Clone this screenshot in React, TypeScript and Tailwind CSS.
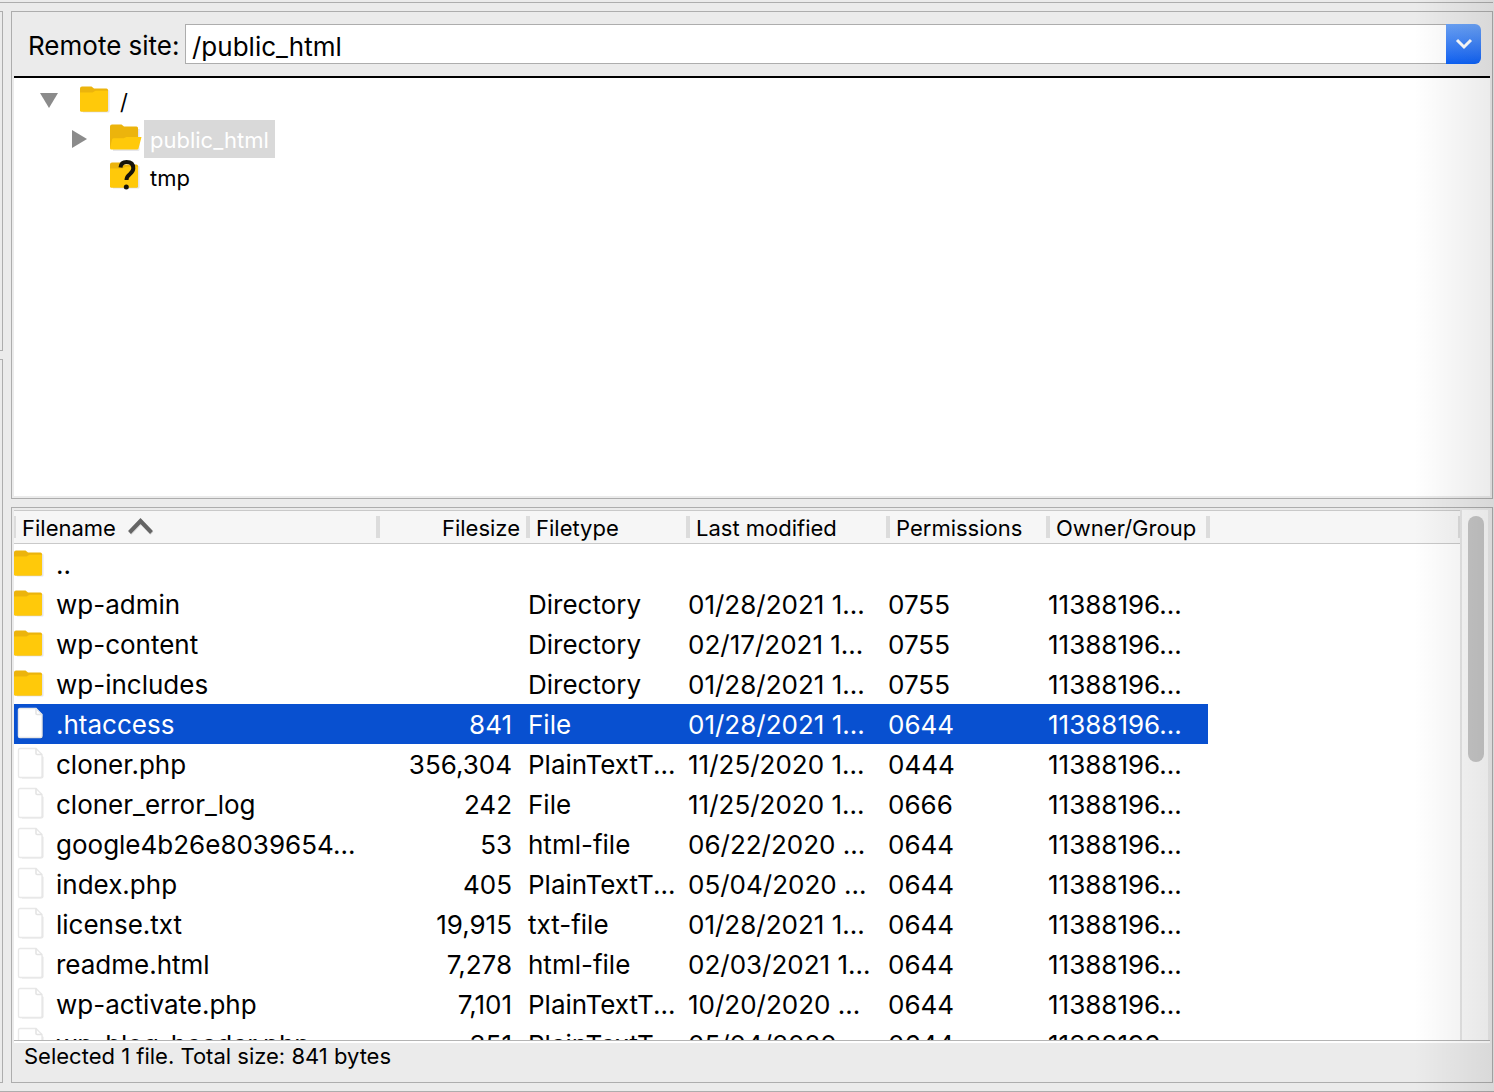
import { useState } from 'react'

const FILES = [
  { name: '..',                    kind: 'folder', size: '',        type: '',              modified: '',                perms: '',     owner: '' },
  { name: 'wp-admin',              kind: 'folder', size: '',        type: 'Directory',     modified: '01/28/2021 1...', perms: '0755', owner: '11388196...' },
  { name: 'wp-content',            kind: 'folder', size: '',        type: 'Directory',     modified: '02/17/2021 1...', perms: '0755', owner: '11388196...' },
  { name: 'wp-includes',           kind: 'folder', size: '',        type: 'Directory',     modified: '01/28/2021 1...', perms: '0755', owner: '11388196...' },
  { name: '.htaccess',             kind: 'file',   size: '841',     type: 'File',          modified: '01/28/2021 1...', perms: '0644', owner: '11388196...' },
  { name: 'cloner.php',            kind: 'file',   size: '356,304', type: 'PlainTextT...', modified: '11/25/2020 1...', perms: '0444', owner: '11388196...' },
  { name: 'cloner_error_log',      kind: 'file',   size: '242',     type: 'File',          modified: '11/25/2020 1...', perms: '0666', owner: '11388196...' },
  { name: 'google4b26e8039654...', kind: 'file',   size: '53',      type: 'html-file',     modified: '06/22/2020 ...',  perms: '0644', owner: '11388196...' },
  { name: 'index.php',             kind: 'file',   size: '405',     type: 'PlainTextT...', modified: '05/04/2020 ...',  perms: '0644', owner: '11388196...' },
  { name: 'license.txt',           kind: 'file',   size: '19,915',  type: 'txt-file',      modified: '01/28/2021 1...', perms: '0644', owner: '11388196...' },
  { name: 'readme.html',           kind: 'file',   size: '7,278',   type: 'html-file',     modified: '02/03/2021 1...', perms: '0644', owner: '11388196...' },
  { name: 'wp-activate.php',       kind: 'file',   size: '7,101',   type: 'PlainTextT...', modified: '10/20/2020 ...',  perms: '0644', owner: '11388196...' },
  { name: 'wp-blog-header.php',    kind: 'file',   size: '351',     type: 'PlainTextT...', modified: '05/04/2020 ...',  perms: '0644', owner: '11388196...' },
]

const COLUMNS = [
  { label: 'Filename',      width: 'w-[364px]' },
  { label: 'Filesize',      width: 'w-[150px]' },
  { label: 'Filetype',      width: 'w-[160px]' },
  { label: 'Last modified', width: 'w-[200px]' },
  { label: 'Permissions',   width: 'w-[160px]' },
  { label: 'Owner/Group',   width: 'w-[160px]' },
]

function FolderIcon({ unknown = false }: { unknown?: boolean }) {
  return (
    <svg width="32" height="32" viewBox="0 0 32 32" className="shrink-0" aria-hidden="true">
      <path d="M2 6h26.500q1 0 1 1v20.500q0 1-1 1H3z" fill="#e6e6ea" />
      <path d="M0 4.500Q0 2.500 2 2.500h9.500l2.500 2h12.500Q28 4.500 28 6v20q0 1.500-1.500 1.500h-25Q0 27.500 0 26z" fill="#ecb40c" />
      <path d="M0 8.500h12.500l3-1.800H28V26q0 1.500-1.500 1.500h-25Q0 27.500 0 26z" fill="#ffc90a" />
      {unknown && (
        <>
          <path d="M10.500 7.500q.6-5.500 6-5.500 6.800 0 6.800 6.300 0 3-3.300 5.700-3.500 2.800-3.500 6" fill="none" stroke="#15130a" strokeWidth="4" />
          <circle cx="16.300" cy="27" r="2.500" fill="#15130a" />
        </>
      )}
    </svg>
  )
}

function OpenFolderIcon() {
  return (
    <svg width="34" height="32" viewBox="0 0 34 32" className="shrink-0" aria-hidden="true">
      <path d="M2 7h27.500v20.500q0 1.500-1.500 1.500H3z" fill="#e6e6ea" />
      <path d="M0 4.500Q0 2.500 2 2.500h9.500l2.500 2h12.500Q28 4.500 28 6v20H0z" fill="#ecb40c" />
      <path d="M0 26.500 2 17.500q.4-1.200 1.600-1.200h10l2.800-1.300H31.500L28.500 26.500q-.4 1-1.600 1H1.500Q0 27.500 0 26.500z" fill="#ffc90a" />
    </svg>
  )
}

function FileIcon() {
  return (
    <svg width="32" height="34" viewBox="0 0 32 34" className="shrink-0" aria-hidden="true">
      <path d="M6 4.500h18l5.500 5.500v19.500q0 2-2 2H8z" fill="#000" opacity=".1" />
      <path d="M4.500 3Q4.500 1.500 6 1.500h16l6 6v21.500q0 1.500-1.500 1.500H6q-1.500 0-1.500-1.500z" fill="#fff" stroke="#e8e8e8" strokeWidth="1.400" />
      <path d="M22 1.500v5q0 1 1 1h5" fill="none" stroke="#e4e4e4" strokeWidth="1.600" />
    </svg>
  )
}

function ColumnHeader({ label, width }: { label: string; width: string }) {
  const isName = label === 'Filename'
  const isSize = label === 'Filesize'

  return (
    <th scope="col" className={`relative h-[34px] border-y border-[#c9c9c9] bg-[#f6f6f6] p-0 font-normal ${width}`}>
      <button type="button" className={`flex w-full items-center gap-3 px-2 pt-0.5 leading-[30px] ${isSize ? 'justify-end' : ''}`}>
        {label}
        {isName && (
          <svg width="26" height="22" viewBox="0 0 26 22" aria-hidden="true">
            <path d="M2 16.500 13 5l11 11.500" fill="none" stroke="#dedede" strokeWidth="4" />
            <path d="M1.500 15.500 12.500 4l11 11.500" fill="none" stroke="#656565" strokeWidth="4" />
          </svg>
        )}
      </button>
      <span className="absolute top-[5px] -right-0.5 z-10 h-[22px] w-1 bg-[#dcdcdc]" />
      {isName && <span className="absolute top-[5px] left-0 h-[22px] w-0.5 bg-[#dcdcdc]" />}
    </th>
  )
}

function RemoteTree() {
  return (
    <section className="flex min-h-0 flex-[488] flex-col border border-[#adadad] px-0.5 pb-0.5">
      <div className="flex h-16 shrink-0 items-start pt-3 pr-[9px] pl-[14px] text-[26px]">
        <label htmlFor="remote-path" className="w-[157px] shrink-0 pt-1 leading-9 whitespace-nowrap">
          Remote site:
        </label>
        <input
          id="remote-path"
          type="text"
          defaultValue="/public_html"
          className="h-10 min-w-0 flex-1 border border-r-0 border-[#adadad] bg-white px-[6px] pt-1 outline-none"
        />
        <button
          type="button"
          aria-label="Show recent paths"
          className="flex h-10 w-[35px] items-center justify-center rounded-r-md bg-linear-to-b from-[#6ba3f8] to-[#0a62f8]"
        >
          <svg width="18" height="12" viewBox="0 0 18 12" aria-hidden="true">
            <path d="m2 2 7 7 7-7" fill="none" stroke="#fff" strokeWidth="3" />
          </svg>
        </button>
      </div>

      <ul className="min-h-0 flex-1 overflow-hidden border-t-2 border-black bg-white pt-1 text-[22px]">
        <li className="flex h-[38px] items-center pl-[26px]">
          <svg width="18" height="16" viewBox="0 0 18 16" aria-hidden="true">
            <path d="M0 0h18L9 15z" fill="#8b8b8b" />
          </svg>
          <span className="ml-[22px] flex pb-0.5">
            <FolderIcon />
          </span>
          <span className="ml-2 pt-0.5">/</span>
        </li>
        <li className="flex h-[38px] items-center pl-[58px]">
          <svg width="16" height="18" viewBox="0 0 16 18" aria-hidden="true">
            <path d="M0 0v18l15-9z" fill="#8b8b8b" />
          </svg>
          <span className="ml-[22px] flex pb-0.5">
            <OpenFolderIcon />
          </span>
          <span className="flex h-[38px] items-center bg-[#d9d9d9] px-[6px] pt-0.5 text-white">public_html</span>
        </li>
        <li className="flex h-[38px] items-center pl-24">
          <span className="flex pb-0.5">
            <FolderIcon unknown />
          </span>
          <span className="ml-2 pt-0.5">tmp</span>
        </li>
      </ul>
    </section>
  )
}

function RemoteFiles() {
  const [selected, setSelected] = useState('.htaccess')

  return (
    <section className="flex min-h-0 flex-[576] flex-col border border-[#adadad] px-0.5 pt-0.5">
      <div className="flex min-h-0 flex-1 overflow-hidden">
        <div className="min-w-0 flex-1 overflow-hidden bg-white">
          <table className="w-full table-fixed border-separate border-spacing-0 text-left">
            <thead className="text-[22px]">
              <tr>
                {COLUMNS.map((col) => (
                  <ColumnHeader key={col.label} label={col.label} width={col.width} />
                ))}
                <td className="border-y border-[#c9c9c9] bg-[#f6f6f6] p-0">
                  <div className="ml-auto h-[22px] w-0.5 bg-[#dcdcdc]" />
                </td>
              </tr>
            </thead>
            <tbody className="text-[26px] leading-9">
              {FILES.map((file) => {
                const cell = `h-10 p-0 whitespace-nowrap ${file.name === selected ? 'bg-[#0850d0] text-white' : ''}`
                return (
                  <tr key={file.name} onClick={() => setSelected(file.name)}>
                    <td className={cell}>
                      <div className="flex h-10 items-center">
                        {file.kind === 'folder' ? <FolderIcon /> : <FileIcon />}
                        <span className="ml-[10px] pt-0.5">{file.name}</span>
                      </div>
                    </td>
                    <td className={`${cell} text-right`}>
                      <div className="pt-0.5 pr-4">{file.size}</div>
                    </td>
                    <td className={cell}><div className="pt-0.5">{file.type}</div></td>
                    <td className={cell}><div className="pt-0.5">{file.modified}</div></td>
                    <td className={cell}><div className="pt-0.5">{file.perms}</div></td>
                    <td className={cell}><div className="pt-0.5">{file.owner}</div></td>
                    <td />
                  </tr>
                )
              })}
            </tbody>
          </table>
        </div>

        {/* Scrollbar */}
        <div className="mr-0.5 w-7 shrink-0 border-l-2 border-[#e4e4e4] bg-[#fafafa] px-1.5 pt-1.5">
          <div className="h-[246px] w-4 rounded-full bg-[#c6c6c6]" />
        </div>
      </div>

      <footer className="h-[42px] shrink-0 border-t border-[#b4b4b4] text-[22px]">
        <p className="border-t-2 border-white px-[10px] leading-[26px]">Selected 1 file. Total size: 841 bytes</p>
      </footer>
    </section>
  )
}

export default function App() {
  return (
    <div className="relative flex h-screen flex-col overflow-hidden bg-[#ebebeb] font-['Inter','Liberation_Sans',sans-serif] text-black">
      <div className="mr-px h-[3px] shrink-0 border-b border-[#adadad]" />

      <div className="flex min-h-0 flex-1 gap-2 py-2 pr-px">
        {/* Edge of the local panes */}
        <div className="flex w-[3px] shrink-0 flex-col gap-2">
          <div className="flex-[339] border border-l-0 border-[#adadad]" />
          <div className="flex-[725] border border-l-0 border-[#adadad]" />
        </div>

        <main className="flex min-w-0 flex-1 flex-col gap-2">
          <RemoteTree />
          <RemoteFiles />
        </main>
      </div>

      <div className="h-px shrink-0 bg-[#adadad]" />

      {/* Shade along the right edge */}
      <div className="pointer-events-none absolute inset-y-0 right-0 z-20 w-20 bg-linear-to-r from-black/0 to-black/8" />
    </div>
  )
}
